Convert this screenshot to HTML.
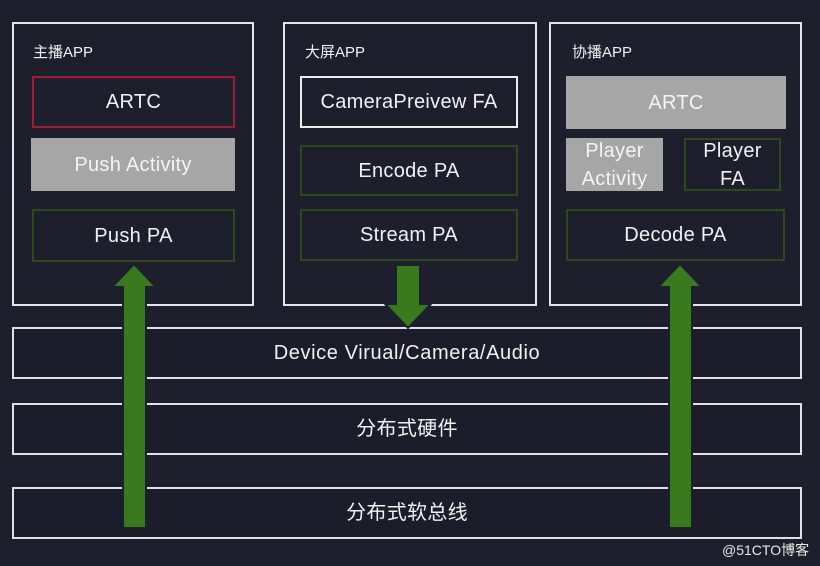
<!DOCTYPE html>
<html><head><meta charset="utf-8"><style>
html,body{margin:0;padding:0}
body{width:820px;height:566px;background:#1e1f2d;position:relative;overflow:hidden;font-family:"Liberation Sans","Noto Sans CJK SC",sans-serif;color:#f2f2f2}
.b{position:absolute;box-sizing:border-box}
.app{border:2px solid #e6e6ea;}
.lbl{position:absolute;font-size:15px;color:#f0f0f0}
.c{display:flex;align-items:center;justify-content:center;text-align:center;font-size:20px;line-height:28px;letter-spacing:0.3px}
.red{border:2px solid #a41a35}
.grn{border:2px solid #2e4a1c}
.wht{border:2px solid #eeeeee}
.gry{background:#a6a6a6;color:#f4f4f4}
.bar{border:2px solid #e2e2e6;background:#1c1d2a}
</style></head><body>
<div class="b app" style="left:12px;top:22px;width:242px;height:284px"></div>
<div class="b app" style="left:283px;top:22px;width:254px;height:284px"></div>
<div class="b app" style="left:549px;top:22px;width:253px;height:284px"></div>
<div class="lbl" style="left:33px;top:41px">主播APP</div>
<div class="lbl" style="left:305px;top:41px">大屏APP</div>
<div class="lbl" style="left:572px;top:41px">协播APP</div>

<div class="b c red" style="left:32px;top:76px;width:203px;height:52px">ARTC</div>
<div class="b c gry" style="left:31px;top:138px;width:204px;height:53px">Push Activity</div>
<div class="b c grn" style="left:32px;top:209px;width:203px;height:53px">Push PA</div>

<div class="b c wht" style="left:300px;top:76px;width:218px;height:52px">CameraPreivew FA</div>
<div class="b c grn" style="left:300px;top:145px;width:218px;height:51px">Encode PA</div>
<div class="b c grn" style="left:300px;top:209px;width:218px;height:52px">Stream PA</div>

<div class="b c gry" style="left:566px;top:76px;width:220px;height:53px">ARTC</div>
<div class="b c gry" style="left:566px;top:138px;width:97px;height:53px">Player<br>Activity</div>
<div class="b c grn" style="left:684px;top:138px;width:97px;height:53px">Player<br>FA</div>
<div class="b c grn" style="left:566px;top:209px;width:219px;height:52px">Decode PA</div>

<div class="b c bar" style="left:12px;top:327px;width:790px;height:52px;letter-spacing:0.6px">Device Virual/Camera/Audio</div>
<div class="b c bar" style="left:12px;top:403px;width:790px;height:52px">分布式硬件</div>
<div class="b c bar" style="left:12px;top:487px;width:790px;height:52px">分布式软总线</div>

<svg class="b" style="left:0;top:0" width="820" height="566">
<g fill="#3a7a1f" stroke="#1e1f2d" stroke-width="2">
<polygon points="134,264 156,287 146,287 146,528 123,528 123,287 112,287"/>
<polygon points="680,264 702,287 692,287 692,528 669,528 669,287 658,287"/>
<polygon points="396,265 420,265 420,304 431,304 408,328 385,304 396,304"/>
</g>
</svg>
<div class="lbl" style="left:722px;top:540px;font-size:14px;color:#e8e8e8">@51CTO博客</div>
</body></html>
